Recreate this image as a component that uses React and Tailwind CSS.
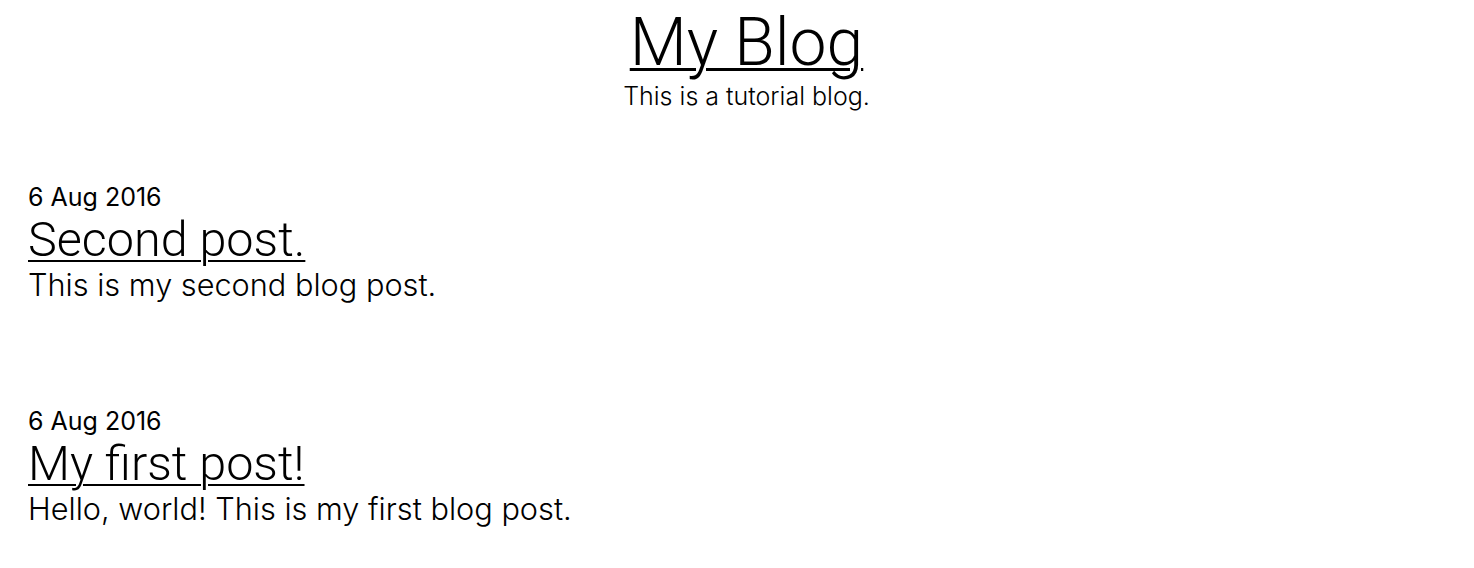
import React from 'react';

const posts = [
  { date: '6 Aug 2016', title: 'Second post.', body: 'This is my second blog post.' },
  { date: '6 Aug 2016', title: 'My first post!', body: 'Hello, world! This is my first blog post.' },
];

const textFont = { fontFamily: '"Helvetica Neue", Inter, "Liberation Sans", sans-serif' };
const headFont = { fontFamily: '"Helvetica Neue", Roboto, "Liberation Sans", sans-serif' };

const App = () => {
  return (
    <div className="min-h-screen bg-white text-black" style={textFont}>
      {/* Header */}
      <header className="text-center pt-[5px] pl-[19px]">
        <h1 className="text-[66px] leading-[76px] font-light" style={headFont}>
          <a href="#" className="underline decoration-[3px] underline-offset-[3px]">My Blog</a>
        </h1>
        <p className="text-[25px] leading-[30px] font-light">This is a tutorial blog.</p>
      </header>

      {/* Posts */}
      <main className="px-[28px] pt-[70px]">
        {posts.map((post, i) => (
          <article key={i} className="mb-[104px]">
            <div className="text-[25px] leading-[32px]">{post.date}</div>
            <h2 className="text-[48.5px] leading-[54px] font-light" style={headFont}>
              <a href="#" className="underline decoration-2 underline-offset-[4px]">{post.title}</a>
            </h2>
            <p className="mt-[2px] text-[30.7px] leading-[32px] font-light">{post.body}</p>
          </article>
        ))}
      </main>
    </div>
  );
};

export default App;
